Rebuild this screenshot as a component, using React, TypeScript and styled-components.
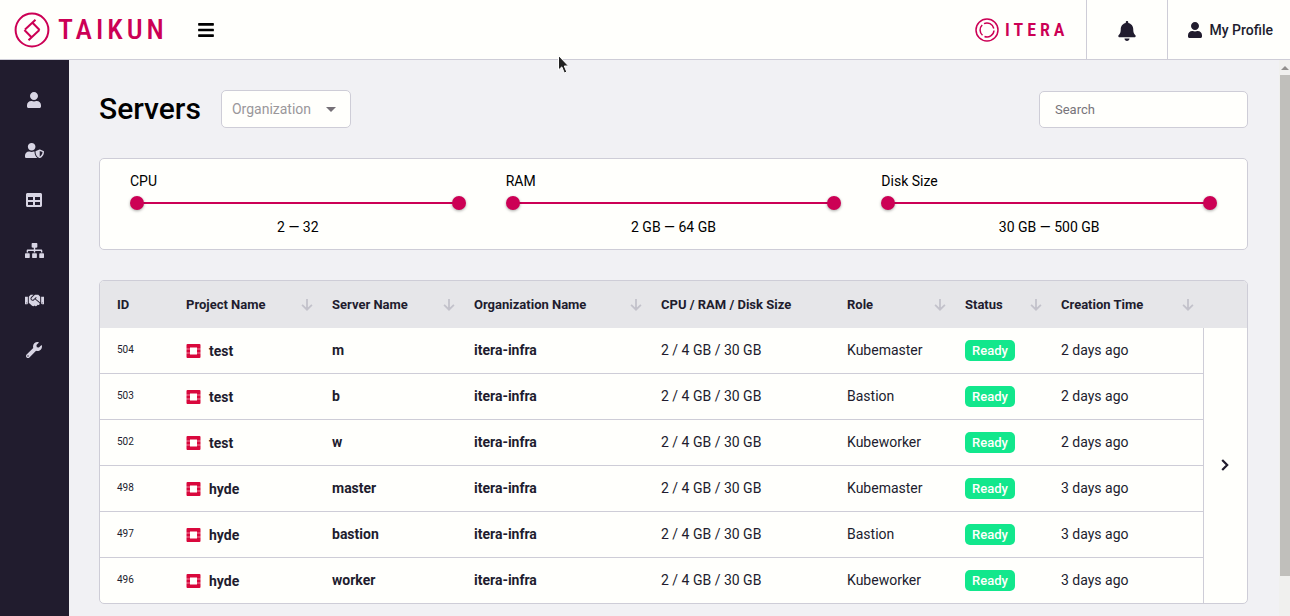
import React, { useState } from "react";
import styled, { createGlobalStyle, css } from "styled-components";
import {
  FaBars,
  FaBell,
  FaHandshake,
  FaSitemap,
  FaTable,
  FaUser,
  FaUserShield,
  FaWrench,
} from "react-icons/fa";

const color = {
  brand: "#cc0055",
  ink: "#211c2e",
  paper: "#fffffc",
  page: "#f1f1f4",
  line: "#cecdd7",
  head: "#e6e6e9",
  ready: "#12e78c",
};

const GlobalStyle = createGlobalStyle`
  *, *::before, *::after { box-sizing: border-box; }
  body {
    margin: 0;
    background: ${color.page};
    color: #000;
    font: 400 14px/20px Roboto, "Liberation Sans", sans-serif;
  }
  button, input { font: inherit; color: inherit; }
  button { border: 0; padding: 0; background: none; cursor: pointer; }
`;

const Shell = styled.div`
  display: flex;
  flex-direction: column;
  height: 100vh;
`;

const TopBar = styled.header`
  flex: none;
  display: flex;
  align-items: stretch;
  height: 60px;
  background: ${color.paper};
  border-bottom: 1px solid ${color.line};
`;

const Brand = styled.a`
  display: flex;
  align-items: center;
  gap: 8px;
  padding-left: 14px;
  color: ${color.brand};
  text-decoration: none;
`;

const Wordmark = styled.span<{ $large?: boolean }>`
  font-family: "Roboto Condensed", Roboto, sans-serif;
  font-weight: ${(p) => (p.$large ? 500 : 600)};
  font-size: ${(p) => (p.$large ? 28 : 18)}px;
  line-height: 30px;
  letter-spacing: 4px;
`;

const MenuButton = styled.button`
  display: flex;
  align-items: center;
  margin-left: 29px;
  font-size: 18px;
`;

const Partner = styled.div`
  display: flex;
  align-items: center;
  gap: 6px;
  margin-left: auto;
  padding-right: 17px;
  color: ${color.brand};
`;

const TopButton = styled.button<{ $wide?: boolean }>`
  display: flex;
  align-items: center;
  justify-content: center;
  gap: 7px;
  padding: ${(p) => (p.$wide ? "0 17px 0 19px" : "2px 30px 0")};
  border-left: 1px solid ${color.line};
  color: ${color.ink};
  font-weight: 500;
  font-size: ${(p) => (p.$wide ? 14 : 20)}px;
`;

const Body = styled.div`
  flex: 1;
  display: flex;
  min-height: 0;
`;

const Sidebar = styled.nav`
  flex: none;
  display: flex;
  flex-direction: column;
  width: 69px;
  padding: 15px 1px 0 0;
  background: ${color.ink};
`;

const SideLink = styled.a`
  display: flex;
  align-items: center;
  justify-content: center;
  height: 50px;
  color: #d8d5e4;
`;

const Main = styled.main`
  flex: 1;
  min-width: 0;
  display: flex;
  flex-direction: column;
  gap: 30px;
  padding: 30px;
  overflow-y: auto;
  scrollbar-width: none;
`;

const ScrollTrack = styled.div`
  flex: none;
  display: flex;
  flex-direction: column;
  align-items: center;
  width: 12px;
  padding-left: 1px;
  border-left: 1px solid ${color.page};
  background: #f0f0ee;
`;

const ScrollArrow = styled.div`
  flex: none;
  width: 0;
  height: 10px;
  margin-bottom: 5px;
  border: 4px solid transparent;
  border-top-width: 6px;
  border-bottom: 4px solid #918f8d;
`;

const ScrollThumb = styled.div`
  width: 100%;
  height: 93%;
  margin-bottom: 40px;
  background: #c0bfbb;
`;

const Heading = styled.div`
  display: flex;
  align-items: center;
  gap: 20px;
  height: 38px;
`;

const Title = styled.h1`
  margin: 0;
  font-weight: 500;
  font-size: 30px;
  line-height: 38px;
`;

const SelectBox = styled.label`
  display: grid;
  align-items: center;
  width: 130px;
  height: 38px;
  background: ${color.paper};
  border: 1px solid ${color.line};
  border-radius: 5px;
`;

const Select = styled.select`
  grid-area: 1 / 1;
  appearance: none;
  width: 100%;
  height: 100%;
  padding: 0 10px;
  border: 0;
  background: none;
  color: #9a979b;
  font: inherit;
`;

const Caret = styled.span`
  grid-area: 1 / 1;
  justify-self: end;
  margin-right: 14px;
  border: 5px solid transparent;
  border-top-color: #757077;
  border-bottom-width: 0;
  pointer-events: none;
`;

const Search = styled.input`
  width: 209px;
  height: 37px;
  margin: 1px 0 0 auto;
  padding: 0 15px;
  background: ${color.paper};
  border: 1px solid ${color.line};
  border-radius: 5px;
  font-size: 13px;
  &::placeholder { color: #77747a; opacity: 1; }
`;

const Filters = styled.section`
  display: grid;
  grid-template-columns: repeat(3, 1fr);
  gap: 40px;
  padding: 12px 30px 10px;
  background: ${color.paper};
  border: 1px solid ${color.line};
  border-radius: 5px;
`;

const Range = styled.fieldset`
  display: flex;
  flex-direction: column;
  min-width: 0;
  margin: 0;
  padding: 0;
  border: 0;
`;

const RangeName = styled.legend`
  padding: 0;
`;

const Rail = styled.div`
  display: grid;
  align-items: center;
  height: 24px;
  background: linear-gradient(${color.brand}, ${color.brand}) center / calc(100% - 14px) 2px no-repeat;
`;

const thumb = css`
  appearance: none;
  width: 14px;
  height: 14px;
  border: 0;
  border-radius: 50%;
  background: ${color.brand};
  box-shadow: 0 1px 3px rgba(0, 0, 0, 0.35);
  pointer-events: auto;
`;

const Slider = styled.input`
  grid-area: 1 / 1;
  appearance: none;
  width: 100%;
  height: 14px;
  margin: 0;
  background: none;
  pointer-events: none;
  &::-webkit-slider-thumb { ${thumb} }
  &::-moz-range-thumb { ${thumb} }
`;

const RangeValue = styled.output`
  line-height: 24px;
  text-align: center;
`;

const TableCard = styled.section`
  flex: none;
  overflow: hidden;
  background: ${color.paper};
  border: 1px solid ${color.line};
  border-radius: 5px;
`;

const Table = styled.table`
  width: 100%;
  table-layout: fixed;
  border-spacing: 0;
  color: ${color.ink};
`;

const Col = styled.col<{ $w: number }>`
  width: ${(p) => p.$w}px;
`;

const Th = styled.th<{ $last?: boolean }>`
  height: 47px;
  padding: 0 ${(p) => (p.$last ? 7 : 0)}px 0 17px;
  background: ${color.head};
  font-weight: 700;
  font-size: 13px;
  text-align: left;
  white-space: nowrap;
`;

const HeadLabel = styled.div`
  display: flex;
  align-items: center;
  justify-content: space-between;
`;

const SortButton = styled.button`
  display: flex;
  color: #c3c2cb;
`;

const Td = styled.td<{ $small?: boolean; $strong?: boolean; $media?: boolean }>`
  height: 46px;
  padding: 0 0 ${(p) => (p.$media ? 0 : 2)}px 17px;
  border-bottom: 1px solid ${color.line};
  font-size: ${(p) => (p.$small ? 10 : 14)}px;
  font-weight: ${(p) => (p.$strong ? 700 : 400)};
  white-space: nowrap;
  tr:last-child > & {
    height: 45px;
    border-bottom: 0;
  }
`;

const Project = styled.span`
  display: flex;
  align-items: center;
  gap: 8px;
`;

const Badge = styled.span`
  display: inline-block;
  padding: 0 7px;
  border-radius: 5px;
  background: ${color.ready};
  color: ${color.paper};
  font-weight: 500;
  font-size: 13px;
  line-height: 21px;
`;

const PagerCell = styled.td`
  padding: 0;
  border-left: 1px solid ${color.line};
`;

const PagerButton = styled.button`
  display: flex;
  justify-content: center;
  width: 100%;
  padding: 0 1px 2px 0;
`;

const Cursor = styled.svg`
  position: absolute;
  top: 54px;
  left: 556px;
  pointer-events: none;
`;

const TaikunMark = () => (
  <svg width="36" height="36" viewBox="0 0 36 36" fill="none" stroke="currentColor" strokeWidth="2" aria-hidden="true">
    <circle cx="18" cy="18" r="16.4" />
    <path d="M11 17.5 L21.5 7.800 M18 10.200 L25.600 18 M25.400 18 L14.500 28.200 M18 25.800 L10.400 18" />
  </svg>
);

const IteraMark = () => (
  <svg width="24" height="24" viewBox="0 0 24 24" fill="none" stroke="currentColor" strokeWidth="1.5" aria-hidden="true">
    <circle cx="12" cy="12" r="11" />
    <path d="M9 5.6 A7 7 0 0 1 18.8 10.500 M19 12.500 A7 7 0 0 1 9.500 18.500 M7.500 17.300 A7 7 0 0 1 7.200 7" />
  </svg>
);

const OpenStackMark = () => (
  <svg width="15" height="14" viewBox="0 0 15 14" aria-hidden="true">
    <path
      fill="#d9083c"
      d="M1.500 0H13.500A1 1 0 0 1 14.500 1V4.700H11V3.500H4V4.700H.5V1A1 1 0 0 1 1.500 0ZM.5 9.300H4V10.500H11V9.300H14.500V13A1 1 0 0 1 13.500 14H1.500A1 1 0 0 1 .5 13ZM.5 5.200H4V8.800H.5ZM11 5.200H14.500V8.800H11Z"
    />
  </svg>
);

const ArrowDown = () => (
  <svg width="16" height="16" viewBox="0 0 16 16" fill="none" stroke="currentColor" strokeWidth="1.8" aria-hidden="true">
    <path d="M8 2 V13 M3.100 7.800 L8 12.700 L12.900 7.800" />
  </svg>
);

const ChevronRight = () => (
  <svg width="12" height="14" viewBox="0 0 12 14" fill="none" stroke="currentColor" strokeWidth="2.2" aria-hidden="true">
    <path d="M3.200 2 L8.200 7 L3.200 12" />
  </svg>
);

const sideItems = [
  { label: "Users", icon: FaUser, size: 16 },
  { label: "Access", icon: FaUserShield, size: 19 },
  { label: "Projects", icon: FaTable, size: 16 },
  { label: "Organizations", icon: FaSitemap, size: 19 },
  { label: "Partners", icon: FaHandshake, size: 19 },
  { label: "Settings", icon: FaWrench, size: 16 },
];

const ranges = [
  { name: "CPU", min: 2, max: 32, unit: "" },
  { name: "RAM", min: 2, max: 64, unit: " GB" },
  { name: "Disk Size", min: 30, max: 500, unit: " GB" },
];

const columns = [
  { label: "ID", width: 69, sort: false },
  { label: "Project Name", width: 146, sort: true },
  { label: "Server Name", width: 142, sort: true },
  { label: "Organization Name", width: 187, sort: true },
  { label: "CPU / RAM / Disk Size", width: 186, sort: false },
  { label: "Role", width: 118, sort: true },
  { label: "Status", width: 96, sort: true },
  { label: "Creation Time", width: 159, sort: true },
];

const servers = [
  { id: 504, project: "test", name: "m", role: "Kubemaster", created: "2 days ago" },
  { id: 503, project: "test", name: "b", role: "Bastion", created: "2 days ago" },
  { id: 502, project: "test", name: "w", role: "Kubeworker", created: "2 days ago" },
  { id: 498, project: "hyde", name: "master", role: "Kubemaster", created: "3 days ago" },
  { id: 497, project: "hyde", name: "bastion", role: "Bastion", created: "3 days ago" },
  { id: 496, project: "hyde", name: "worker", role: "Kubeworker", created: "3 days ago" },
];

function RangeFilter({ name, min, max, unit }: (typeof ranges)[number]) {
  const [low, setLow] = useState(min);
  const [high, setHigh] = useState(max);
  return (
    <Range>
      <RangeName>{name}</RangeName>
      <Rail>
        <Slider
          type="range"
          aria-label={`${name} minimum`}
          min={min}
          max={max}
          value={low}
          onChange={(e) => setLow(Math.min(Number(e.target.value), high))}
        />
        <Slider
          type="range"
          aria-label={`${name} maximum`}
          min={min}
          max={max}
          value={high}
          onChange={(e) => setHigh(Math.max(Number(e.target.value), low))}
        />
      </Rail>
      <RangeValue>{`${low}${unit} — ${high}${unit}`}</RangeValue>
    </Range>
  );
}

export default function App() {
  return (
    <Shell>
      <GlobalStyle />
      <TopBar>
        <Brand href="#">
          <TaikunMark />
          <Wordmark $large>TAIKUN</Wordmark>
        </Brand>
        <MenuButton aria-label="Toggle menu">
          <FaBars />
        </MenuButton>
        <Partner>
          <IteraMark />
          <Wordmark>ITERA</Wordmark>
        </Partner>
        <TopButton aria-label="Notifications">
          <FaBell />
        </TopButton>
        <TopButton $wide>
          <FaUser size={16} />
          My Profile
        </TopButton>
      </TopBar>
      <Body>
        <Sidebar>
          {sideItems.map(({ label, icon: Icon, size }) => (
            <SideLink key={label} href="#" aria-label={label}>
              <Icon size={size} />
            </SideLink>
          ))}
        </Sidebar>
        <Main>
          <Heading>
            <Title>Servers</Title>
            <SelectBox>
              <Select aria-label="Organization">
                <option>Organization</option>
              </Select>
              <Caret />
            </SelectBox>
            <Search type="search" placeholder="Search" aria-label="Search" />
          </Heading>
          <Filters>
            {ranges.map((r) => (
              <RangeFilter key={r.name} {...r} />
            ))}
          </Filters>
          <TableCard>
            <Table>
              <colgroup>
                {columns.map((c) => (
                  <Col key={c.label} $w={c.width} />
                ))}
                <Col $w={44} />
              </colgroup>
              <thead>
                <tr>
                  {columns.map((c, i) => (
                    <Th key={c.label} scope="col" $last={i === columns.length - 1}>
                      <HeadLabel>
                        {c.label}
                        {c.sort && (
                          <SortButton aria-label={`Sort by ${c.label}`}>
                            <ArrowDown />
                          </SortButton>
                        )}
                      </HeadLabel>
                    </Th>
                  ))}
                  <Th aria-hidden="true" />
                </tr>
              </thead>
              <tbody>
                {servers.map((s, i) => (
                  <tr key={s.id}>
                    <Td $small>{s.id}</Td>
                    <Td $strong $media>
                      <Project>
                        <OpenStackMark />
                        {s.project}
                      </Project>
                    </Td>
                    <Td $strong>{s.name}</Td>
                    <Td $strong>itera-infra</Td>
                    <Td>2 / 4 GB / 30 GB</Td>
                    <Td>{s.role}</Td>
                    <Td $media>
                      <Badge>Ready</Badge>
                    </Td>
                    <Td>{s.created}</Td>
                    {i === 0 && (
                      <PagerCell rowSpan={servers.length}>
                        <PagerButton aria-label="More columns">
                          <ChevronRight />
                        </PagerButton>
                      </PagerCell>
                    )}
                  </tr>
                ))}
              </tbody>
            </Table>
          </TableCard>
        </Main>
        <ScrollTrack aria-hidden="true">
          <ScrollArrow />
          <ScrollThumb />
        </ScrollTrack>
      </Body>
      <Cursor width="14" height="22" viewBox="0 0 14 22" aria-hidden="true">
        <path
          d="M2.500 1.500 V16 L5.800 12.900 L8.300 19 L10.800 18 L8.300 12 H12.500 Z"
          fill="#222"
          stroke="#fff"
          strokeWidth="1"
        />
      </Cursor>
    </Shell>
  );
}
